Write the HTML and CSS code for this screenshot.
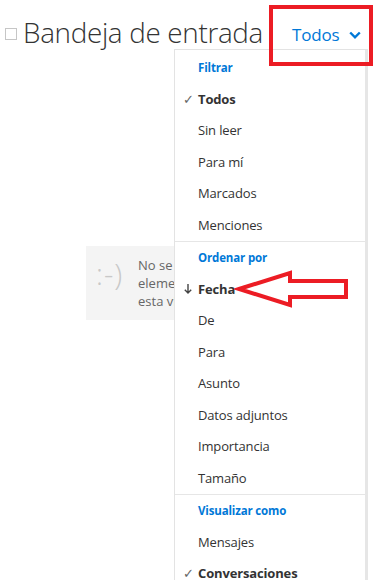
FILE: index.html
```html
<!DOCTYPE html>
<html lang="es">
<head>
<meta charset="utf-8">
<title>Bandeja de entrada</title>
<link rel="stylesheet" href="styles.css">
</head>
<body>
<div class="page">
  <header class="top">
    <span class="checkbox"></span>
    <h1 class="title">Bandeja de entrada</h1>
    <button class="filter">Todos
      <svg class="chev" width="12" height="8" viewBox="0 0 12 8"><path d="M1.2 1.5 L6 6.3 L10.8 1.5" fill="none" stroke="#0078d7" stroke-width="2.4"/></svg>
    </button>
  </header>

  <div class="empty">
    <span class="face">:-)</span>
    <p class="empty-text">No se encontraron<br>elementos en<br>esta vista.</p>
  </div>

  <div class="menu">
    <div class="group">
      <div class="row head">Filtrar</div>
      <div class="row bold"><span class="ico">&#10003;</span>Todos</div>
      <div class="row">Sin leer</div>
      <div class="row">Para mí</div>
      <div class="row">Marcados</div>
      <div class="row">Menciones</div>
    </div>
    <div class="group">
      <div class="row head">Ordenar por</div>
      <div class="row bold"><span class="ico arrow-down"><svg width="8" height="11" viewBox="0 0 8 11"><path d="M4 0.5 V9.5 M0.8 6.3 L4 9.5 L7.2 6.3" fill="none" stroke="#444" stroke-width="1.4"/></svg></span>Fecha</div>
      <div class="row">De</div>
      <div class="row">Para</div>
      <div class="row">Asunto</div>
      <div class="row">Datos adjuntos</div>
      <div class="row">Importancia</div>
      <div class="row">Tamaño</div>
    </div>
    <div class="group">
      <div class="row head">Visualizar como</div>
      <div class="row">Mensajes</div>
      <div class="row bold"><span class="ico">&#10003;</span>Conversaciones</div>
    </div>
  </div>

  <div class="callout-box"></div>
  <svg class="callout-arrow" width="116" height="40" viewBox="234 269 116 40">
    <polygon points="239,289 290,273 290,281 346,281 346,297 290,297 290,305" fill="#fff" stroke="#ec1c24" stroke-width="4" stroke-linejoin="miter"/>
  </svg>
</div>
</body>
</html>
```

FILE: styles.css
```css
* { box-sizing: border-box; }
html, body { margin: 0; padding: 0; background: #fff; }
body {
  font-family: "Open Sans", "Noto Sans", sans-serif;
  color: #333;
  overflow: hidden;
}
.page {
  position: relative;
  width: 374px;
  height: 580px;
  overflow: hidden;
}
.top {
  display: flex;
  align-items: center;
  padding: 12px 0 0 5px;
  height: 52px;
}
.checkbox {
  width: 12px;
  height: 12px;
  border: 1px solid #c6c6c6;
  margin-right: 6px;
  margin-top: 4px;
}
.title {
  margin: 0;
  font-weight: 300;
  font-size: 27.8px;
  color: #333;
  letter-spacing: -0.3px;
  white-space: nowrap;
}
.filter {
  margin-left: 29px;
  margin-top: 4px;
  border: none;
  background: none;
  padding: 0;
  font-family: inherit;
  font-size: 17px;
  letter-spacing: -0.2px;
  color: #0078d7;
  display: flex;
  align-items: center;
  gap: 10px;
}
.chev { margin-top: 2px; }

.empty {
  margin: 194px 0 0 86px;
  width: 220px;
  height: 74px;
  background: #f4f4f4;
  display: flex;
  align-items: flex-start;
  padding: 10px 0 0 10px;
}
.face {
  font-size: 29px;
  font-weight: 300;
  color: #c8c8c8;
  letter-spacing: 1px;
  margin-top: 0;
  width: 42px;
  line-height: 36px;
}
.empty-text {
  margin: 0;
  font-size: 13px;
  line-height: 18px;
  color: #666;
  white-space: nowrap;
}

.menu {
  position: absolute;
  left: 174px;
  top: 49px;
  width: 194px;
  height: 560px;
  background: #fff;
  border: 1px solid #e3e3e3;
  border-right: 3px solid #e6e6e6;
  padding-top: 1.5px;
}
.group + .group { border-top: 1px solid #e6e6e6; }
.row {
  height: 31.5px;
  display: flex;
  align-items: center;
  padding-left: 23px;
  font-size: 13px;
  letter-spacing: -0.15px;
  color: #333;
  position: relative;
  white-space: nowrap;
}
.row.head {
  color: #0078d7;
  font-weight: 700;
  font-size: 11.5px;
}
.row.bold { font-weight: 700; }
.ico {
  position: absolute;
  left: 8px;
  top: 50%;
  transform: translateY(-50%);
  font-weight: 400;
  color: #666;
  font-size: 13px;
  display: flex;
}
.arrow-down { left: 9px; }

.callout-box {
  position: absolute;
  left: 269px;
  top: 5px;
  width: 104px;
  height: 61px;
  border: 4px solid #ec1c24;
}
.callout-arrow {
  position: absolute;
  left: 234px;
  top: 269px;
}
```
